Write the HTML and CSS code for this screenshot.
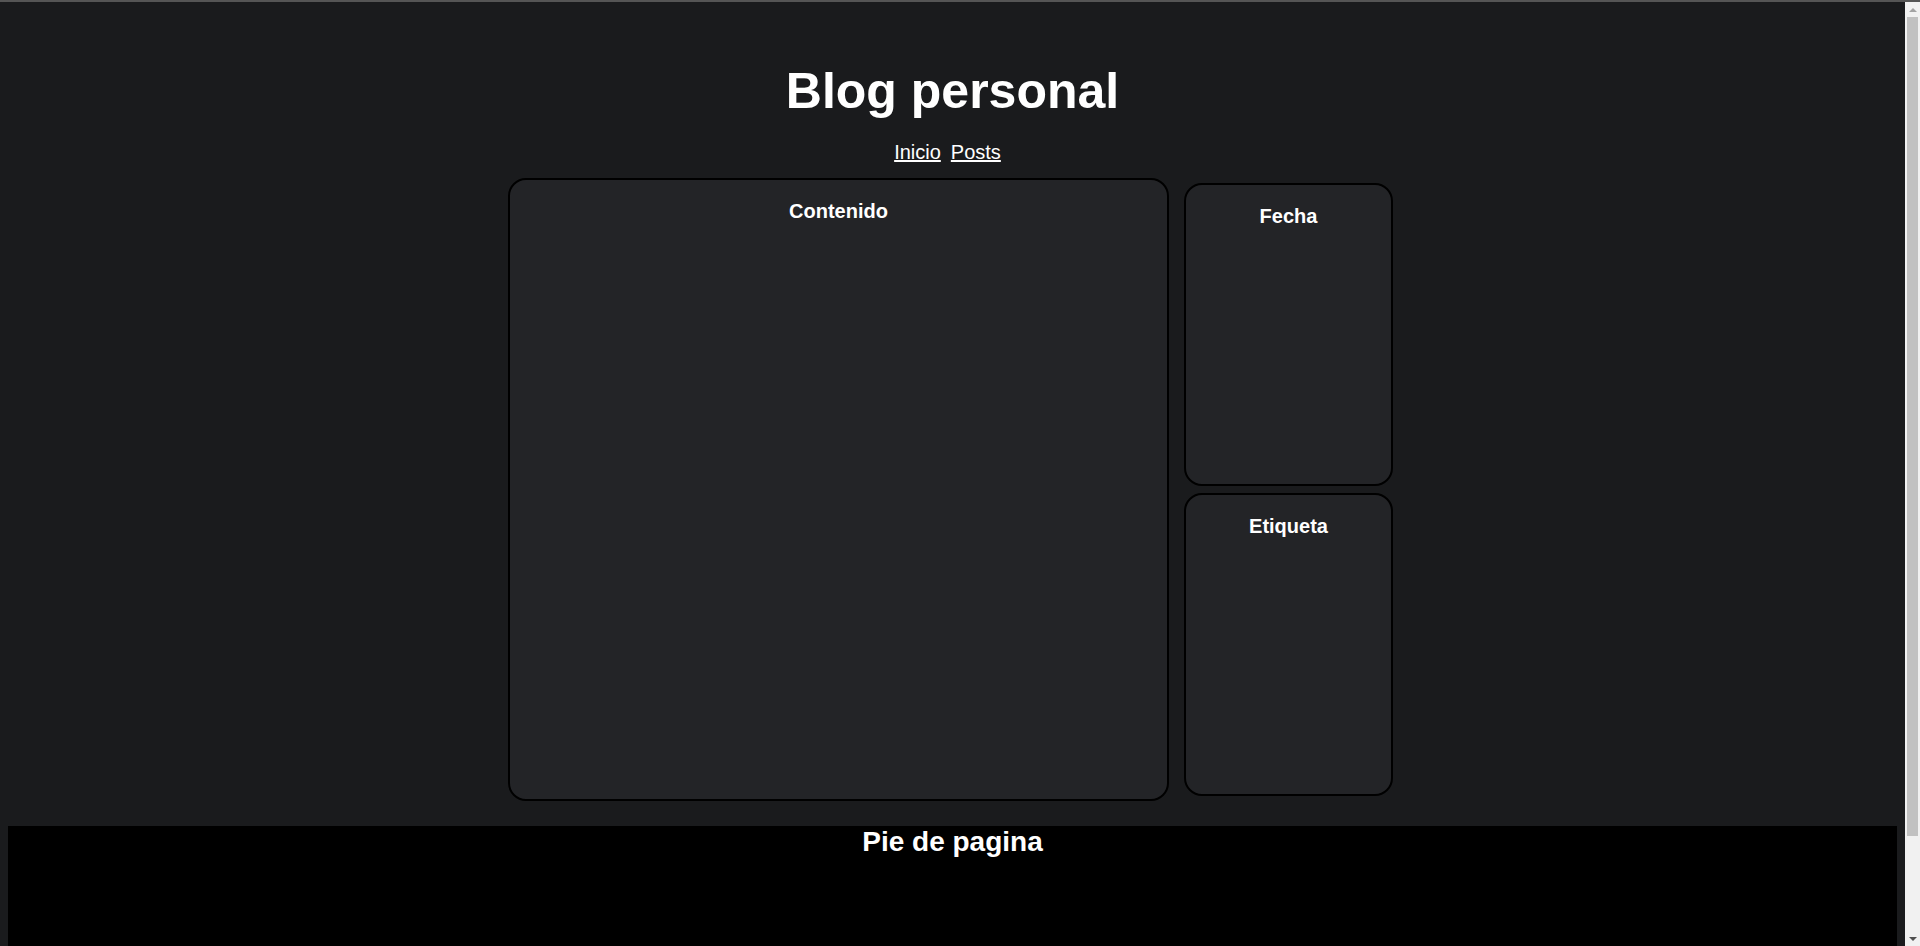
FILE: index.html
```html
<!DOCTYPE html>
<html lang="es">
<head>
<meta charset="utf-8">
<title>Blog personal</title>
<link rel="stylesheet" href="styles.css">
</head>
<body>
<header class="site-header">
  <h1 class="site-title">Blog personal</h1>
  <nav class="site-nav">
    <a href="#" class="nav-link">Inicio</a>
    <a href="#" class="nav-link">Posts</a>
  </nav>
</header>
<div class="layout">
  <main class="card card-main">
    <h3 class="card-title">Contenido</h3>
  </main>
  <aside class="sidebar">
    <section class="card card-side">
      <h3 class="card-title">Fecha</h3>
    </section>
    <section class="card card-side">
      <h3 class="card-title">Etiqueta</h3>
    </section>
  </aside>
</div>
<footer class="site-footer">
  <h2 class="footer-title">Pie de pagina</h2>
</footer>
<div class="fake-scrollbar" aria-hidden="true">
  <div class="sb-button"><span class="sb-arrow-up"></span></div>
  <div class="sb-track"><div class="sb-thumb"></div></div>
  <div class="sb-button"><span class="sb-arrow-down"></span></div>
</div>
</body>
</html>
```

FILE: styles.css
```css
html {
  border-top: 2px solid #555555;
  background: #1a1b1d;
  padding-right: 15px;
}

body {
  margin: 8px;
  background: #1a1b1d;
  color: #ffffff;
  font-family: "Liberation Sans", Arial, sans-serif;
}

.site-header {
  padding-top: 53px;
  text-align: center;
}

.site-title {
  margin: 0;
  font-size: 50px;
  font-weight: bold;
  line-height: 57px;
}

.site-nav {
  display: flex;
  justify-content: center;
  margin-top: 21px;
  font-size: 20px;
  line-height: 23px;
}

.nav-link {
  color: #ffffff;
  text-decoration: underline;
  margin-right: 10px;
}

.layout {
  display: flex;
  justify-content: center;
  align-items: flex-start;
  gap: 15px;
  margin-top: 14px;
  padding-right: 4px;
}

.card {
  box-sizing: border-box;
  background: #232427;
  border: 2px solid #000000;
  border-radius: 18px;
  padding-top: 20px;
  text-align: center;
}

.card-main {
  width: 661px;
  height: 623px;
}

.sidebar {
  display: flex;
  flex-direction: column;
  gap: 7px;
  padding-top: 5px;
}

.card-side {
  width: 209px;
  height: 303px;
}

.card-title {
  margin: 0;
  font-size: 20px;
  font-weight: bold;
  line-height: 23px;
}

.site-footer {
  margin-top: 25px;
  height: 224px;
  background: #000000;
  text-align: center;
}

.footer-title {
  margin: 0;
  font-size: 28px;
  font-weight: bold;
  line-height: 32px;
}

/* decorative scrollbar as in the reference */
.fake-scrollbar {
  position: fixed;
  top: 2px;
  right: 0;
  bottom: 0;
  width: 15px;
  background: #f1f1f1;
  display: flex;
  flex-direction: column;
}

.sb-button {
  height: 15px;
  flex: none;
  display: flex;
  align-items: center;
  justify-content: center;
}

.sb-arrow-up {
  width: 0;
  height: 0;
  border-left: 4px solid transparent;
  border-right: 4px solid transparent;
  border-bottom: 4px solid #a3a3a3;
}

.sb-arrow-down {
  width: 0;
  height: 0;
  border-left: 4px solid transparent;
  border-right: 4px solid transparent;
  border-top: 4px solid #505050;
}

.sb-track {
  flex: 1;
  padding: 0 2px;
}

.sb-thumb {
  height: 819px;
  background: #c1c1c1;
}
```
